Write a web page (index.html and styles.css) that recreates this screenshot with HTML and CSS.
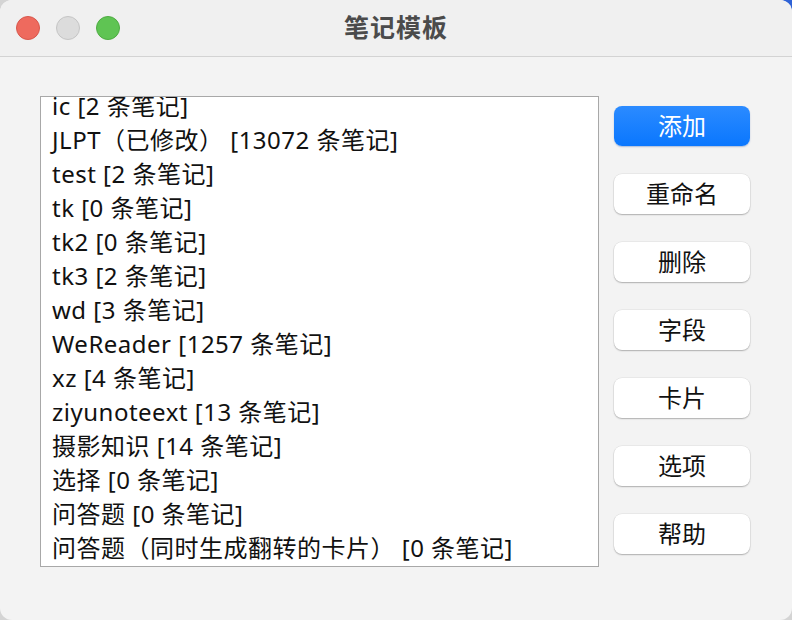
FILE: index.html
```html
<!DOCTYPE html>
<html lang="zh-CN">
<head>
<meta charset="utf-8">
<title>笔记模板</title>
<link rel="stylesheet" href="styles.css">
</head>
<body>
<div class="window">
  <div class="titlebar">
    <div class="lights">
      <span class="light red"></span>
      <span class="light gray"></span>
      <span class="light green"></span>
    </div>
    <div class="title">笔记模板</div>
  </div>
  <div class="content">
    <div class="listbox">
      <ul class="list">
        <li>ic [2 条笔记]</li>
        <li>JLPT（已修改） [13072 条笔记]</li>
        <li>test [2 条笔记]</li>
        <li>tk [0 条笔记]</li>
        <li>tk2 [0 条笔记]</li>
        <li>tk3 [2 条笔记]</li>
        <li>wd [3 条笔记]</li>
        <li>WeReader [1257 条笔记]</li>
        <li>xz [4 条笔记]</li>
        <li>ziyunoteext [13 条笔记]</li>
        <li>摄影知识 [14 条笔记]</li>
        <li>选择 [0 条笔记]</li>
        <li>问答题 [0 条笔记]</li>
        <li>问答题（同时生成翻转的卡片） [0 条笔记]</li>
      </ul>
    </div>
    <div class="buttons">
      <button class="btn primary">添加</button>
      <button class="btn">重命名</button>
      <button class="btn">删除</button>
      <button class="btn">字段</button>
      <button class="btn">卡片</button>
      <button class="btn">选项</button>
      <button class="btn">帮助</button>
    </div>
  </div>
</div>
</body>
</html>
```
FILE: styles.css
```css
html, body {
  margin: 0;
  padding: 0;
}
body {
  width: 792px;
  height: 620px;
  overflow: hidden;
  background: radial-gradient(circle at 100% 0%, #2f62d6 0, #2f62d6 14px, #d4d4d4 16px);
  font-family: "Noto Sans", "Noto Sans CJK SC", sans-serif;
}
.window {
  width: 792px;
  height: 620px;
  border-radius: 12px;
  overflow: hidden;
  background: #f3f3f3;
  display: flex;
  flex-direction: column;
}
.titlebar {
  height: 56px;
  flex: none;
  background: #f0f0f0;
  border-bottom: 1px solid #d3d3d3;
  position: relative;
  display: flex;
  align-items: center;
  justify-content: center;
}
.lights {
  position: absolute;
  left: 16px;
  top: 16px;
  display: flex;
  gap: 16px;
}
.light {
  width: 22px;
  height: 22px;
  border-radius: 50%;
  border: 1px solid transparent;
}
.red { background: #ee6a5e; border-color: #d8574c; }
.gray { background: #dcdcdc; border-color: #c5c5c5; }
.green { background: #5fc453; border-color: #4eac42; }
.title {
  font-family: "Noto Sans CJK SC", sans-serif;
  font-weight: 700;
  font-size: 25px;
  letter-spacing: 1px;
  color: #4b4b4b;
  margin-top: -5px;
}
.content {
  display: flex;
  padding: 39px 0 0 40px;
  gap: 15px;
}
.listbox {
  width: 557px;
  height: 469px;
  border: 1px solid #a8a8a8;
  background: #ffffff;
  overflow: hidden;
}
.list {
  list-style: none;
  margin: -8px 0 0 0;
  padding: 0 0 0 11px;
}
.list li {
  height: 34px;
  line-height: 34px;
  font-size: 24px;
  letter-spacing: 0.5px;
  color: #111;
  white-space: nowrap;
}
.buttons {
  display: flex;
  flex-direction: column;
  gap: 28px;
  padding-top: 10px;
}
.btn {
  width: 136px;
  height: 40px;
  border: none;
  border-radius: 8px;
  background: #ffffff;
  box-shadow: 0 1px 1.5px rgba(0,0,0,0.25), 0 0 0 0.5px rgba(0,0,0,0.08);
  font-family: "Noto Sans CJK SC", sans-serif;
  font-size: 24px;
  color: #111;
  padding: 0 0 3px 0;
  line-height: 37px;
}
.btn.primary {
  background: linear-gradient(#2b8bff, #0a77fe);
  color: #ffffff;
  box-shadow: 0 1px 1.5px rgba(0,60,160,0.3);
}
```
